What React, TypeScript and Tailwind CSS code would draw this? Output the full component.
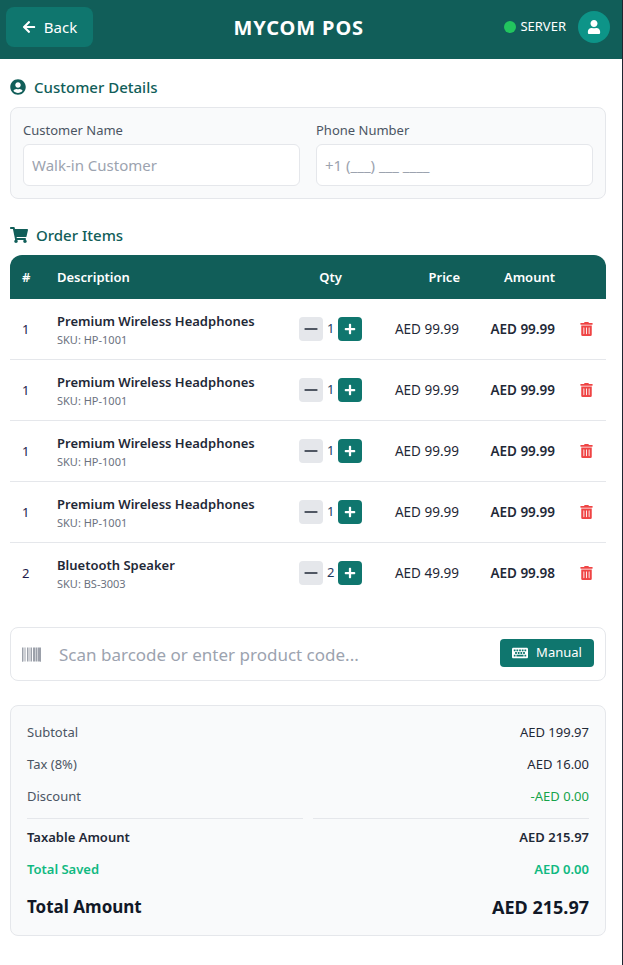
import { Minus } from 'lucide-react';
import { FaArrowLeft, FaBarcode, FaKeyboard, FaPlus, FaShoppingCart, FaTrashAlt, FaUser, FaUserCircle } from 'react-icons/fa';

const items = [
  { idx: 1, name: 'Premium Wireless Headphones', sku: 'HP-1001', qty: 1, price: '99.99', amount: '99.99' },
  { idx: 1, name: 'Premium Wireless Headphones', sku: 'HP-1001', qty: 1, price: '99.99', amount: '99.99' },
  { idx: 1, name: 'Premium Wireless Headphones', sku: 'HP-1001', qty: 1, price: '99.99', amount: '99.99' },
  { idx: 1, name: 'Premium Wireless Headphones', sku: 'HP-1001', qty: 1, price: '99.99', amount: '99.99' },
  { idx: 2, name: 'Bluetooth Speaker', sku: 'BS-3003', qty: 2, price: '49.99', amount: '99.98' },
];

const rowGrid = 'grid grid-cols-[47px_242px_65px_96px_95px_51px] items-center';

function Field({ label, placeholder }: { label: string; placeholder: string }) {
  return (
    <div className="flex-1">
      <label className="block text-[13px] leading-[18px] text-[#4b5563] mb-[5px]">{label}</label>
      <input
        readOnly
        placeholder={placeholder}
        className="w-full h-[42px] px-2 text-[15px] bg-white border border-[#e5e7eb] rounded-md placeholder:text-[#9ca3af]"
      />
    </div>
  );
}

function SummaryRow({ label, value, className = '', valueClass = '' }: { label: string; value: string; className?: string; valueClass?: string }) {
  return (
    <div className={`flex justify-between items-center h-8 text-[13px] ${className}`}>
      <span>{label}</span>
      <span className={valueClass}>{value}</span>
    </div>
  );
}

export default function App() {
  return (
    <div className="min-h-[965px] bg-white border-r border-[#1f2430] font-['Noto_Sans',sans-serif] text-[#1f2937]">
      <header className="h-[59px] bg-[#115e59] flex items-center justify-between pl-[6px] pr-3 pb-[5px] text-white">
        <button className="w-[87px] h-10 rounded-lg bg-[#0f766e] flex items-center justify-center gap-2 text-[15px]">
          <FaArrowLeft className="w-[14px] h-[14px]" />
          Back
        </button>
        <h1 className="text-[20px] font-bold tracking-[0.9px] mt-[2px]">MYCOM POS</h1>
        <div className="flex items-center">
          <span className="w-3 h-3 rounded-full bg-[#22c55e] mr-1" />
          <span className="text-[13px] mr-3">SERVER</span>
          <span className="w-8 h-8 rounded-full bg-[#0d9488] flex items-center justify-center">
            <FaUser className="w-[14px] h-[14px]" />
          </span>
        </div>
      </header>

      <main className="px-[10px] w-[596px] box-content">
        <h2 className="flex items-center gap-2 mt-[18px] h-5 text-[15px] font-medium text-[#115e59]">
          <FaUserCircle className="w-4 h-4" />
          Customer Details
        </h2>
        <section className="mt-[10px] h-[92px] bg-[#f9fafb] border border-[#e5e7eb] rounded-lg px-3 pt-[13px] flex gap-4">
          <Field label="Customer Name" placeholder="Walk-in Customer" />
          <Field label="Phone Number" placeholder="+1 (___) ___ ____" />
        </section>

        <h2 className="flex items-center gap-2 mt-[26px] h-5 text-[15px] font-medium text-[#115e59]">
          <FaShoppingCart className="w-[18px] h-4" />
          Order Items
        </h2>

        <div className="mt-[10px]">
          <div className={`${rowGrid} h-11 bg-[#115e59] rounded-t-xl text-white text-[13px] font-semibold`}>
            <span className="pl-3 pt-[2px]">#</span>
            <span className="pt-[2px]">Description</span>
            <span className="text-center pr-[2px] pt-[2px]">Qty</span>
            <span className="text-right pt-[2px]">Price</span>
            <span className="text-right pt-[2px]">Amount</span>
            <span />
          </div>
          {items.map((item, i) => (
            <div key={i} className={`${rowGrid} h-[61px] text-[13px] border-b border-[#e5e7eb] last:border-b-transparent`}>
              <span className="pl-3 pt-[1px] text-[#1e1b4b]">{item.idx}</span>
              <div className="pt-[2px]">
                <div className="font-semibold text-[#1f2937] leading-[18px]">{item.name}</div>
                <div className="text-[11px] text-[#6b7280] leading-[16px] mt-[2px]">SKU: {item.sku}</div>
              </div>
              <div className="flex items-center gap-[4px]">
                <button className="w-6 h-6 rounded bg-[#e5e7eb] flex items-center justify-center text-[#1f2937]">
                  <Minus size={20} strokeWidth={2} />
                </button>
                <span className="w-[7px] text-center text-[#1e3a5f]">{item.qty}</span>
                <button className="w-6 h-6 rounded bg-[#0f766e] flex items-center justify-center text-white">
                  <FaPlus className="w-3 h-3" />
                </button>
              </div>
              <span className="text-right text-[13.5px] pr-[1px]">AED {item.price}</span>
              <span className="text-right text-[13.5px] font-semibold">AED {item.amount}</span>
              <span className="flex justify-end pr-[13px]">
                <FaTrashAlt className="w-[13px] h-[14px] text-[#ef4444]" />
              </span>
            </div>
          ))}
        </div>

        <div className="mt-[23px] h-[54px] border border-[#e5e7eb] rounded-lg flex items-center pl-[11px] pr-[11px]">
          <FaBarcode className="w-[19px] h-[19px] text-[#6b7280]" />
          <input
            readOnly
            placeholder="Scan barcode or enter product code..."
            className="flex-1 min-w-0 ml-[18px] pt-[2px] text-[17px] bg-transparent placeholder:text-[#9ca3af]"
          />
          <button className="w-[94px] h-7 mb-[2px] rounded bg-[#0f766e] text-white text-[13px] flex items-center justify-center gap-2">
            <FaKeyboard className="w-4 h-4" />
            Manual
          </button>
        </div>

        <section className="mt-6 h-[231px] bg-[#f9fafb] border border-[#e5e7eb] rounded-lg px-4 pt-[11px]">
          <SummaryRow label="Subtotal" value="AED 199.97" className="text-[#4b5563]" valueClass="text-[#1f2937]" />
          <SummaryRow label="Tax (8%)" value="AED 16.00" className="text-[#4b5563]" valueClass="text-[#1f2937]" />
          <SummaryRow label="Discount" value="-AED 0.00" className="text-[#4b5563]" valueClass="text-[#16a34a]" />
          <div className="flex gap-[10px] mt-[5px] mb-[3px]">
            <div className="flex-1 h-px bg-[#e5e7eb]" />
            <div className="flex-1 h-px bg-[#e5e7eb]" />
          </div>
          <SummaryRow label="Taxable Amount" value="AED 215.97" className="font-semibold text-[#1f2937]" />
          <SummaryRow label="Total Saved" value="AED 0.00" className="font-semibold text-[#10b981]" />
          <div className="flex justify-between items-center mt-[1px] h-10 text-[17px] font-bold text-[#111827]">
            <span>Total Amount</span>
            <span className="text-[18px]">AED 215.97</span>
          </div>
        </section>
      </main>
    </div>
  );
}
